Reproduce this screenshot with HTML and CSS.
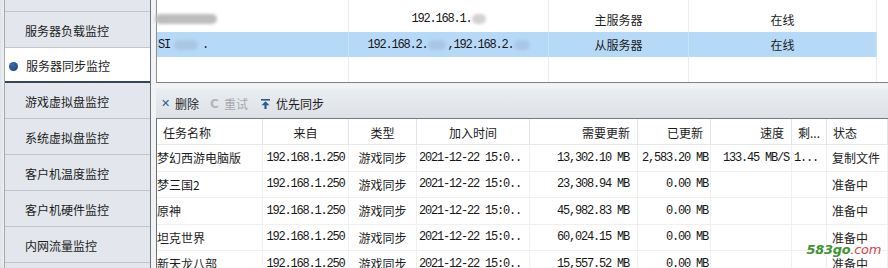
FILE: index.html
```html
<!DOCTYPE html>
<html lang="zh-CN">
<head>
<meta charset="utf-8">
<title>服务器同步监控</title>
<link rel="stylesheet" href="styles.css">
</head>
<body>
<div class="app">
  <div class="edge"></div>
  <nav class="sidebar">
    <div class="nav-item partial"></div>
    <div class="nav-item">服务器负载监控</div>
    <div class="nav-item active"><span class="dot"></span>服务器同步监控</div>
    <div class="nav-item">游戏虚拟盘监控</div>
    <div class="nav-item">系统虚拟盘监控</div>
    <div class="nav-item">客户机温度监控</div>
    <div class="nav-item">客户机硬件监控</div>
    <div class="nav-item">内网流量监控</div>
  </nav>
  <main class="main">
    <section class="servers">
      <div class="srow spacer"><div></div><div></div><div></div><div></div><div></div></div>
      <div class="srow">
        <div class="c-left"><span class="blob wide"></span></div>
        <div class="c-center mono">192.168.1.<span class="blob small"></span></div>
        <div class="c-center">主服务器</div>
        <div class="c-center">在线</div>
        <div></div>
      </div>
      <div class="srow selected">
        <div class="c-left mono">SI<span class="blob mid"></span>.</div>
        <div class="c-center mono nowrap">192.168.2.<span class="blob gap"></span>,192.168.2.<span class="blob tail"></span></div>
        <div class="c-center">从服务器</div>
        <div class="c-center">在线</div>
        <div class="plain"></div>
      </div>
      <div class="srow filler"><div></div><div></div><div></div><div></div><div></div></div>
    </section>

    <div class="toolbar">
      <span class="tool"><span class="ico ico-del">✕</span>删除</span>
      <span class="tool disabled"><span class="ico ico-retry">C</span>重试</span>
      <span class="tool"><svg class="ico-top" width="9" height="10" viewBox="0 0 9 10"><rect x="0" y="0" width="9" height="1.6" fill="#2f5b94"/><path d="M4.5 2.2 L8.5 6.2 L5.6 6.2 L5.6 10 L3.4 10 L3.4 6.2 L0.5 6.2 Z" fill="#2f5b94"/></svg>优先同步</span>
    </div>

    <section class="tasks">
      <div class="trow head">
        <div class="h-left">任务名称</div>
        <div class="h-center">来自</div>
        <div class="h-center">类型</div>
        <div class="h-center">加入时间</div>
        <div class="h-right">需要更新</div>
        <div class="h-right">已更新</div>
        <div class="h-right">速度</div>
        <div class="h-left">剩...</div>
        <div class="h-left">状态</div>
      </div>
      <div class="trow">
        <div class="d-name">梦幻西游电脑版</div>
        <div class="d-center mono">192.168.1.250</div>
        <div class="d-center">游戏同步</div>
        <div class="d-left mono">2021-12-22 15:0..</div>
        <div class="d-right mono need">13,302.10 MB</div>
        <div class="d-right mono">2,583.20 MB</div>
        <div class="d-right mono">133.45 MB/S</div>
        <div class="d-left mono">1...</div>
        <div class="d-status">复制文件</div>
      </div>
      <div class="trow">
        <div class="d-name">梦三国2</div>
        <div class="d-center mono">192.168.1.250</div>
        <div class="d-center">游戏同步</div>
        <div class="d-left mono">2021-12-22 15:0..</div>
        <div class="d-right mono need">23,308.94 MB</div>
        <div class="d-right mono">0.00 MB</div>
        <div></div>
        <div></div>
        <div class="d-status">准备中</div>
      </div>
      <div class="trow">
        <div class="d-name">原神</div>
        <div class="d-center mono">192.168.1.250</div>
        <div class="d-center">游戏同步</div>
        <div class="d-left mono">2021-12-22 15:0..</div>
        <div class="d-right mono need">45,982.83 MB</div>
        <div class="d-right mono">0.00 MB</div>
        <div></div>
        <div></div>
        <div class="d-status">准备中</div>
      </div>
      <div class="trow">
        <div class="d-name">坦克世界</div>
        <div class="d-center mono">192.168.1.250</div>
        <div class="d-center">游戏同步</div>
        <div class="d-left mono">2021-12-22 15:0..</div>
        <div class="d-right mono need">60,024.15 MB</div>
        <div class="d-right mono">0.00 MB</div>
        <div></div>
        <div></div>
        <div class="d-status">准备中</div>
      </div>
      <div class="trow">
        <div class="d-name">新天龙八部</div>
        <div class="d-center mono">192.168.1.250</div>
        <div class="d-center">游戏同步</div>
        <div class="d-left mono">2021-12-22 15:0..</div>
        <div class="d-right mono need">15,557.52 MB</div>
        <div class="d-right mono">0.00 MB</div>
        <div></div>
        <div></div>
        <div class="d-status">准备中</div>
      </div>
    </section>
  </main>
  <div class="watermark"><span class="wm-green">583go</span><span class="wm-red">.com</span></div>
</div>
</body>
</html>
```

FILE: styles.css
```css
* { box-sizing: border-box; }
html, body { margin: 0; padding: 0; }
body {
  width: 888px;
  height: 268px;
  overflow: hidden;
  background: #f1f2f4;
  font-family: "Noto Sans CJK SC", "Noto Sans", sans-serif;
  font-size: 12px;
  color: #1c1c1c;
}
.app {
  position: relative;
  display: flex;
  width: 888px;
  height: 268px;
}
.edge {
  width: 5px;
  flex: none;
  background: linear-gradient(to right, #dfe3e8, #eef0f3);
  border-right: 1px solid #a4a8ad;
}
.sidebar {
  width: 146px;
  flex: none;
  background: #e3e7ed;
  border-right: 1px solid #6f747a;
  display: flex;
  flex-direction: column;
}
.nav-item {
  height: 36px;
  flex: none;
  display: flex;
  align-items: center;
  padding: 3px 0 0 20px;
  border-bottom: 1px solid #c2c6cc;
  line-height: 1;
  white-space: nowrap;
}
.nav-item.partial { height: 12px; padding: 0; }
.nav-item.active {
  background: #ffffff;
  padding-left: 3px;
  height: 35px;
  border-bottom: 2px solid #34465a;
}
.dot {
  width: 9px;
  height: 9px;
  border-radius: 50%;
  background: radial-gradient(circle at 40% 35%, #3a6db0, #173f78);
  margin-right: 8px;
  margin-left: 1px;
}
.main {
  flex: 1;
  display: flex;
  flex-direction: column;
  padding-left: 5px;
  background: #f2f3f5;
  min-width: 0;
}
.servers {
  height: 83px;
  flex: none;
  background: #ffffff;
  border-left: 1px solid #8b8f94;
  border-bottom: 1px solid #7e8287;
  display: flex;
  flex-direction: column;
}
.srow {
  display: grid;
  grid-template-columns: 192px 200px 140px 188px 1fr;
  height: 26px;
  flex: none;
  align-items: center;
}
.srow > div {
  height: 100%;
  display: flex;
  align-items: center;
  border-right: 1px solid #ececec;
  white-space: nowrap;
}
.srow > div:last-child { border-right: none; }
.srow.spacer { height: 6px; }
.srow.selected { height: 25px; }
.srow.selected > div { background: #b7d9f8; border-right-color: #c8e2fa; }
.srow.selected > div.plain { background: #ffffff; }
.srow.filler { flex: 1; }
.c-left { padding-left: 1px; }
.c-center { justify-content: center; }
.nowrap { overflow: visible; }
.mono {
  font-family: "Liberation Mono", "DejaVu Sans Mono", monospace;
  font-size: 12px;
  letter-spacing: -1.2px;
  color: #161616;
}
.blob {
  display: inline-block;
  height: 10px;
  background: #c4c4c4;
  border-radius: 5px;
  filter: blur(1.5px);
}
.blob.wide { width: 62px; margin-left: -3px; background: #bdbdbd; }
.blob.small { width: 14px; background: #d2d2d2; }
.blob.mid { width: 24px; margin: 0 4px; background: #a9c7e4; }
.blob.gap { width: 18px; margin-right: 2px; background: #a9c7e4; }
.blob.tail { width: 16px; background: #a9c7e4; }

.toolbar {
  margin-top: 5px;
  height: 30px;
  flex: none;
  display: flex;
  align-items: center;
  gap: 11px;
  padding-left: 5px;
  background: linear-gradient(#eaedf1, #dde1e6);
  border-top: 1px solid #eef0f3;
}
.tool {
  display: flex;
  align-items: center;
  gap: 5px;
  line-height: 1;
  color: #1c1c1c;
}
.tool.disabled { color: #a6a8ab; }
.ico {
  font-family: "DejaVu Sans", sans-serif;
  font-weight: bold;
  font-size: 11px;
  width: 9px;
  text-align: center;
}
.ico-del { color: #2f5b94; }
.ico-retry { color: #b3b5b8; font-size: 12px; }
.ico-top { margin-left: 2px; margin-right: 1px; }

.tasks {
  flex: 1;
  background: #ffffff;
  border-left: 1px solid #6e7378;
  border-top: 1px solid #74787d;
  overflow: hidden;
}
.trow {
  display: grid;
  grid-template-columns: 106px 86px 68px 113px 108px 73px 81px 35px 1fr;
  height: 26.5px;
  border-bottom: 1px solid #f0f0f0;
}
.trow.head { height: 26px; border-bottom: 1px solid #e9e9e9; }
.trow > div {
  display: flex;
  align-items: center;
  border-right: 1px solid #f0f0f0;
  white-space: nowrap;
  overflow: hidden;
}
.trow.head > div { border-right-color: #e4e4e4; padding-top: 1px; }
.h-left { padding-left: 6px; }
.h-center { justify-content: center; }
.h-right { justify-content: flex-end; padding-right: 7px; }
.d-name { padding-left: 0; }
.d-center { justify-content: center; }
.d-left { padding-left: 2px; }
.d-right { justify-content: flex-end; padding-right: 2px; }
.d-right.need { padding-right: 8px; }
.d-status { padding-left: 5px; }

.watermark {
  position: absolute;
  right: 7px;
  bottom: 12px;
  font-family: "DejaVu Sans", sans-serif;
  font-size: 13px;
  font-weight: bold;
  font-style: italic;
  letter-spacing: -0.3px;
  text-shadow: 0 0 2px #ffffff, 0 0 2px #ffffff, 0 0 2px #ffffff;
  line-height: 1;
}
.wm-green { color: #3d9430; }
.wm-red { color: #e2414a; font-weight: normal; }
```
